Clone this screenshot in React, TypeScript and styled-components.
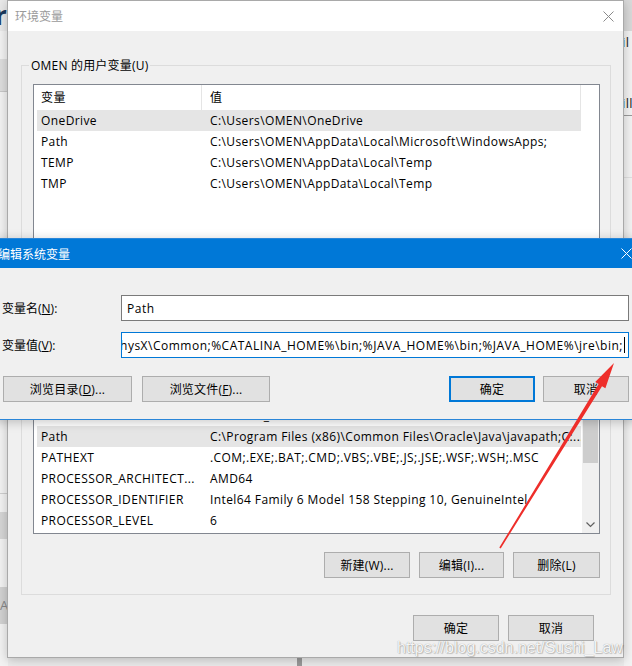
import React from "react";
import styled, { createGlobalStyle } from "styled-components";

const FONT = `"Open Sans", "Noto Sans CJK SC", sans-serif`;

const Global = createGlobalStyle`
  html, body { margin: 0; padding: 0; }
  body {
    width: 632px; height: 666px; overflow: hidden;
    background: #ececec;
    font-family: ${FONT};
    font-size: 12px;
    letter-spacing: 0.4px;
    color: #000;
  }
  * { box-sizing: border-box; }
`;

/* ---------- desktop & backdrop ---------- */

const Desktop = styled.div`
  position: relative;
  width: 632px;
  height: 666px;
  overflow: hidden;
  background: #ececec;
`;

const Backdrop = styled.div`
  position: absolute;
  inset: 0;
  display: flex;
  justify-content: space-between;
`;

const Strip = styled.div<{ $w: number }>`
  width: ${(p) => p.$w}px;
  display: flex;
  flex-direction: column;
  overflow: hidden;
`;

const Band = styled.div<{ $h: number; $bg: string; $line?: string }>`
  height: ${(p) => p.$h}px;
  flex: none;
  background: ${(p) => p.$bg};
  border-bottom: ${(p) => (p.$line ? `1px solid ${p.$line}` : "none")};
  font-size: 13px;
  line-height: ${(p) => p.$h}px;
  color: #222;
  overflow: hidden;
  white-space: nowrap;
`;

const BigGlyph = styled.span`
  display: block;
  margin-left: -5px;
  font: bold 26px/30px ${FONT};
  color: #1b3a5c;
`;

const FaintGlyph = styled.span`
  color: #888;
`;

const EdgeGlyph = styled.span`
  margin-left: -2px;
`;

const BottomStrip = styled.div`
  position: absolute;
  left: 0;
  right: 0;
  bottom: 0;
  height: 8px;
  display: flex;
  padding-left: 297px;
`;

const Knob = styled.div`
  width: 5px;
  height: 8px;
  background: #9a9a9a;
`;

/* ---------- windows ---------- */

const Window = styled.div<{ $left: number; $top: number; $width: number; $active?: boolean }>`
  position: absolute;
  left: ${(p) => p.$left}px;
  top: ${(p) => p.$top}px;
  width: ${(p) => p.$width}px;
  background: #f0f0f0;
  border: 1px solid ${(p) => (p.$active ? "#2a86d8" : "#a9a9a9")};
  box-shadow: 0 2px 10px rgba(0, 0, 0, 0.22);
  display: flex;
  flex-direction: column;
`;

const MainFrame = styled(Window)`
  height: 658px;
`;

const TitleBar = styled.div<{ $active?: boolean }>`
  height: ${(p) => (p.$active ? 29 : 30)}px;
  flex: none;
  display: flex;
  align-items: center;
  justify-content: space-between;
  padding: 0 ${(p) => (p.$active ? 7 : 9)}px 0 7px;
  background: ${(p) => (p.$active ? "#0078d7" : "#ffffff")};
  color: ${(p) => (p.$active ? "#ffffff" : "#9a9a9a")};
  font-size: 12px;
  letter-spacing: 0;
`;

const CloseIcon = ({ color }: { color: string }) => (
  <svg width="11" height="11" viewBox="0 0 11 11">
    <path d="M0.5 0.5 L10.5 10.5 M10.5 0.5 L0.5 10.5" stroke={color} strokeWidth="1" />
  </svg>
);

const MainBody = styled.div`
  flex: 1;
  display: flex;
  flex-direction: column;
  padding: 34px 12px 16px 13px;
`;

const Group = styled.div<{ $gapTop?: number; $padBottom: number }>`
  border: 1px solid #dcdcdc;
  margin-top: ${(p) => p.$gapTop ?? 0}px;
  padding: 0 10px ${(p) => p.$padBottom}px 11px;
  display: flex;
  flex-direction: column;
`;

const GroupTitle = styled.div`
  margin: -8px 0 0 -4px;
  align-self: flex-start;
  padding: 0 2px;
  height: 16px;
  line-height: 16px;
  background: #f0f0f0;
  letter-spacing: 0.2px;
`;

const ListBox = styled.div<{ $h: number }>`
  margin-top: 10px;
  height: ${(p) => p.$h}px;
  border: 1px solid #828790;
  background: #fff;
  display: flex;
  overflow: hidden;
`;

const ListMain = styled.div`
  flex: 1;
  display: flex;
  flex-direction: column;
  padding-left: 3px;
  min-width: 0;
`;

const Header = styled.div`
  height: 25px;
  flex: none;
  display: flex;
  background: #fff;
`;

const HeadCell = styled.div<{ $w: number; $pl: number }>`
  width: ${(p) => p.$w}px;
  flex: none;
  padding-left: ${(p) => p.$pl}px;
  line-height: 25px;
  border-right: 1px solid #e5e5e5;
`;

const Rows = styled.div<{ $bottom?: boolean }>`
  flex: 1;
  display: flex;
  flex-direction: column;
  justify-content: ${(p) => (p.$bottom ? "flex-end" : "flex-start")};
  padding-bottom: ${(p) => (p.$bottom ? 2 : 0)}px;
  overflow: hidden;
`;

const Row = styled.div<{ $sel?: boolean }>`
  height: 21px;
  flex: none;
  width: 544px;
  display: flex;
  background: ${(p) => (p.$sel ? "#e5e5e5" : "transparent")};
  line-height: 21px;
  white-space: nowrap;
`;

const Cell = styled.div<{ $w: number; $pl: number }>`
  width: ${(p) => p.$w}px;
  flex: none;
  padding-left: ${(p) => p.$pl}px;
  overflow: hidden;
`;

const ScrollBar = styled.div`
  width: 17px;
  flex: none;
  background: #f0f0f0;
  display: flex;
  flex-direction: column;
`;

const ScrollArrow = styled.div`
  height: 17px;
  flex: none;
  display: flex;
  align-items: center;
  justify-content: center;
`;

const ScrollTrack = styled.div`
  flex: 1;
  display: flex;
  flex-direction: column;
  padding: 0 1px;
`;

const Thumb = styled.div`
  margin-top: 32px;
  height: 82px;
  background: #cdcdcd;
`;

const ButtonRow = styled.div<{ $mt: number }>`
  margin-top: ${(p) => p.$mt}px;
  display: flex;
  justify-content: flex-end;
  gap: 9px;
`;

const Button = styled.div<{ $w: number; $default?: boolean }>`
  width: ${(p) => p.$w}px;
  height: 26px;
  flex: none;
  background: #e1e1e1;
  border: ${(p) => (p.$default ? "2px solid #0078d7" : "1px solid #adadad")};
  display: flex;
  align-items: center;
  justify-content: center;
  font-size: 12px;
  letter-spacing: 0.2px;
  color: #000;
`;

const Footer = styled.div`
  margin-top: auto;
  display: flex;
  justify-content: flex-end;
  gap: 9px;
  padding-right: 17px;
`;

/* ---------- edit dialog ---------- */

const EditBody = styled.div`
  padding: 27px 10px 17px 11px;
  display: flex;
  flex-direction: column;
`;

const FieldGrid = styled.div`
  display: grid;
  grid-template-columns: 119px 1fr;
  row-gap: 11px;
  align-items: center;
`;

const Label = styled.div`
  white-space: nowrap;
  letter-spacing: 0;
`;

const Underline = styled.span`
  text-decoration: underline;
`;

const TextBox = styled.div<{ $focus?: boolean }>`
  height: 26px;
  border: 1px solid ${(p) => (p.$focus ? "#0078d7" : "#7a7a7a")};
  background: #fff;
  display: flex;
  align-items: center;
  justify-content: ${(p) => (p.$focus ? "flex-end" : "flex-start")};
  padding: 0 3px 0 5px;
  overflow: hidden;
  white-space: nowrap;
  letter-spacing: 0.5px;
`;

const Caret = styled.span`
  display: inline-block;
  width: 1px;
  height: 16px;
  background: #000;
  margin-left: 1px;
  flex: none;
`;

const DialogButtons = styled.div`
  margin-top: 18px;
  display: flex;
  align-items: center;
  gap: 10px;
  padding-left: 1px;
`;

const Spacer = styled.div`
  flex: 1;
`;

const CancelButton = styled(Button)`
  margin-left: -2px;
`;

/* ---------- overlays ---------- */

const Overlay = styled.svg`
  position: absolute;
  left: 0;
  top: 0;
  pointer-events: none;
`;

const Watermark = styled.div`
  position: absolute;
  left: 397px;
  top: 638px;
  font: 16px/20px "Liberation Sans", Arial, sans-serif;
  letter-spacing: 0;
  color: rgba(255, 255, 255, 0.92);
  text-shadow: 0 0 1px rgba(0, 0, 0, 0.4), 1px 1px 1px rgba(0, 0, 0, 0.18);
  white-space: nowrap;
  pointer-events: none;
`;

/* ---------- data ---------- */

const userVars: [string, string][] = [
  ["OneDrive", "C:\\Users\\OMEN\\OneDrive"],
  ["Path", "C:\\Users\\OMEN\\AppData\\Local\\Microsoft\\WindowsApps;"],
  ["TEMP", "C:\\Users\\OMEN\\AppData\\Local\\Temp"],
  ["TMP", "C:\\Users\\OMEN\\AppData\\Local\\Temp"],
];

const sysVars: [string, string][] = [
  ["CATALINA_HOME", "D:\\apache-tomcat-9.0.22"],
  ["ComSpec", "C:\\Windows\\system32\\cmd.exe"],
  ["DriverData", "C:\\Windows\\System32\\Drivers\\DriverData"],
  ["JAVA_HOME", "C:\\Program Files\\Java\\jdk1.8.0_221"],
  ["NUMBER_OF_PROCESSORS", "12"],
  ["OS", "Windows_NT"],
  ["Path", "C:\\Program Files (x86)\\Common Files\\Oracle\\Java\\javapath;C:..."],
  ["PATHEXT", ".COM;.EXE;.BAT;.CMD;.VBS;.VBE;.JS;.JSE;.WSF;.WSH;.MSC"],
  ["PROCESSOR_ARCHITECT...", "AMD64"],
  ["PROCESSOR_IDENTIFIER", "Intel64 Family 6 Model 158 Stepping 10, GenuineIntel"],
  ["PROCESSOR_LEVEL", "6"],
];

const pathValue =
  "C:\\Program Files\\NVIDIA Corporation\\PhysX\\Common;%CATALINA_HOME%\\bin;%JAVA_HOME%\\bin;%JAVA_HOME%\\jre\\bin;";

const VarList = ({
  vars,
  selected,
  height,
  scroll,
}: {
  vars: [string, string][];
  selected: number;
  height: number;
  scroll?: boolean;
}) => (
  <ListBox $h={height}>
    <ListMain>
      <Header>
        <HeadCell $w={165} $pl={4}>变量</HeadCell>
        <HeadCell $w={379} $pl={8}>值</HeadCell>
      </Header>
      <Rows $bottom={scroll}>
        {vars.map(([k, v], i) => (
          <Row key={k + i} $sel={i === selected}>
            <Cell $w={165} $pl={4}>{k}</Cell>
            <Cell $w={379} $pl={8}>{v}</Cell>
          </Row>
        ))}
      </Rows>
    </ListMain>
    {scroll && (
      <ScrollBar>
        <ScrollArrow />
        <ScrollTrack>
          <Thumb />
        </ScrollTrack>
        <ScrollArrow>
          <svg width="9" height="6" viewBox="0 0 9 6">
            <path d="M0.5 0.5 L4.5 4.5 L8.5 0.5" stroke="#606060" strokeWidth="1.2" fill="none" />
          </svg>
        </ScrollArrow>
      </ScrollBar>
    )}
  </ListBox>
);

const leftBands: { h: number; bg: string; line?: string; text?: string }[] = [
  { h: 31, bg: "#e9e9e9", text: "r" },
  { h: 28, bg: "#f3f3f3" },
  { h: 33, bg: "#dedede", line: "#c8c8c8" },
  { h: 402, bg: "#f3f3f3", line: "#cfcfcf" },
  { h: 18, bg: "#f3f3f3" },
  { h: 27, bg: "#d6d6d6" },
  { h: 48, bg: "#f3f3f3" },
  { h: 37, bg: "#d2d2d2", text: "A" },
  { h: 42, bg: "#f3f3f3" },
];

const rightBands: { h: number; bg: string; line?: string; text?: string }[] = [
  { h: 31, bg: "#d9d9d9" },
  { h: 22, bg: "#f3f3f3", text: "il" },
  { h: 38, bg: "#f3f3f3" },
  { h: 25, bg: "#f3f3f3", line: "#9a9a9a", text: "ill" },
  { h: 62, bg: "#f3f3f3", line: "#e0e0e0" },
  { h: 488, bg: "#f3f3f3" },
];

export default function App() {
  return (
    <Desktop>
      <Global />
      <Backdrop>
        <Strip $w={8}>
          {leftBands.map((b, i) => (
            <Band key={i} $h={b.h} $bg={b.bg} $line={b.line}>
              {b.text === "r" ? <BigGlyph>r</BigGlyph> : b.text === "A" ? <FaintGlyph>A</FaintGlyph> : null}
            </Band>
          ))}
        </Strip>
        <Strip $w={8}>
          {rightBands.map((b, i) => (
            <Band key={i} $h={b.h} $bg={b.bg} $line={b.line}>
              {b.text ? <EdgeGlyph>{b.text}</EdgeGlyph> : null}
            </Band>
          ))}
        </Strip>
      </Backdrop>
      <BottomStrip>
        <Knob />
      </BottomStrip>

      <MainFrame $left={7} $top={0} $width={617}>
        <TitleBar>
          <span>环境变量</span>
          <CloseIcon color="#8a8a8a" />
        </TitleBar>
        <MainBody>
          <Group $padBottom={12}>
            <GroupTitle>OMEN 的用户变量(U)</GroupTitle>
            <VarList vars={userVars} selected={0} height={166} />
            <ButtonRow $mt={12}>
              <Button $w={86}>新建(N)...</Button>
              <Button $w={86}>编辑(E)...</Button>
              <Button $w={86}>删除(D)</Button>
            </ButtonRow>
          </Group>
          <Group $gapTop={11} $padBottom={16}>
            <GroupTitle>系统变量(S)</GroupTitle>
            <VarList vars={sysVars} selected={6} height={203} scroll />
            <ButtonRow $mt={18}>
              <Button $w={86}>新建(W)...</Button>
              <Button $w={85}>编辑(I)...</Button>
              <Button $w={87}>删除(L)</Button>
            </ButtonRow>
          </Group>
          <Footer>
            <Button $w={86}>确定</Button>
            <Button $w={86}>取消</Button>
          </Footer>
        </MainBody>
      </MainFrame>

      <Window $left={-10} $top={238} $width={650} $active>
        <TitleBar $active>
          <span>编辑系统变量</span>
          <CloseIcon color="#ffffff" />
        </TitleBar>
        <EditBody>
          <FieldGrid>
            <Label>
              变量名(<Underline>N</Underline>):
            </Label>
            <TextBox>Path</TextBox>
            <Label>
              变量值(<Underline>V</Underline>):
            </Label>
            <TextBox $focus>
              <span>{pathValue}</span>
              <Caret />
            </TextBox>
          </FieldGrid>
          <DialogButtons>
            <Button $w={129}>
              浏览目录(<Underline>D</Underline>)...
            </Button>
            <Button $w={128}>
              浏览文件(<Underline>F</Underline>)...
            </Button>
            <Spacer />
            <Button $w={86} $default>
              确定
            </Button>
            <CancelButton $w={86}>取消</CancelButton>
          </DialogButtons>
        </EditBody>
      </Window>

      <Overlay width="632" height="666" viewBox="0 0 632 666">
        <polygon
          points="614,363 605.4,388.3 602,386.2 500.7,548.4 499.3,547.6 598.6,384 595.2,381.9"
          fill="#ee2e2a"
        />
      </Overlay>
      <Watermark>https://blog.csdn.net/Sushi_Law</Watermark>
    </Desktop>
  );
}
